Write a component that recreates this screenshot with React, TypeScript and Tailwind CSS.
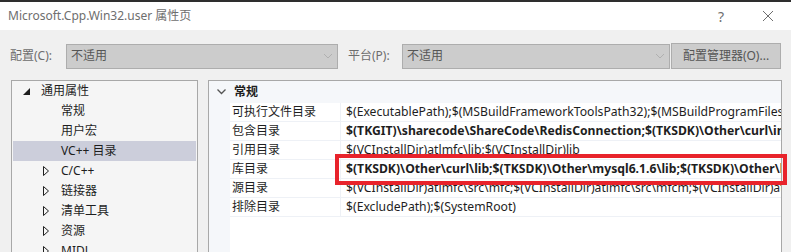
import React from "react";

const font = { fontFamily: '"Noto Sans", "Noto Sans CJK SC", sans-serif' };

type TreeItem = { label: string; level: 0 | 1; arrow?: "open" | "closed"; selected?: boolean };

const tree: TreeItem[] = [
  { label: "通用属性", level: 0, arrow: "open" },
  { label: "常规", level: 1 },
  { label: "用户宏", level: 1 },
  { label: "VC++ 目录", level: 1, selected: true },
  { label: "C/C++", level: 1, arrow: "closed" },
  { label: "链接器", level: 1, arrow: "closed" },
  { label: "清单工具", level: 1, arrow: "closed" },
  { label: "资源", level: 1, arrow: "closed" },
  { label: "MIDL", level: 1, arrow: "closed" },
];

const props = [
  { name: "可执行文件目录", value: "$(ExecutablePath);$(MSBuildFrameworkToolsPath32);$(MSBuildProgramFiles32)\\Microsoft SDKs" },
  { name: "包含目录", value: "$(TKGIT)\\sharecode\\ShareCode\\RedisConnection;$(TKSDK)\\Other\\curl\\include", bold: true },
  { name: "引用目录", value: "$(VCInstallDir)atlmfc\\lib;$(VCInstallDir)lib" },
  { name: "库目录", value: "$(TKSDK)\\Other\\curl\\lib;$(TKSDK)\\Other\\mysql6.1.6\\lib;$(TKSDK)\\Other\\boost", bold: true },
  { name: "源目录", value: "$(VCInstallDir)atlmfc\\src\\mfc;$(VCInstallDir)atlmfc\\src\\mfcm;$(VCInstallDir)atlmfc\\src\\atl" },
  { name: "排除目录", value: "$(ExcludePath);$(SystemRoot)" },
];

const Chevron = () => (
  <svg width="10" height="6" viewBox="0 0 10 6" className="text-[#b0b0b0]">
    <path d="M1 1l4 4 4-4" fill="none" stroke="currentColor" strokeWidth="1" />
  </svg>
);

const Select = ({ className }: { className: string }) => (
  <div className={`flex items-center justify-between h-[25px] bg-[#cccccc] border border-[#adadad] pl-[4px] pr-[4px] text-[#555555] text-[12px] ${className}`}>
    <span>不适用</span>
    <Chevron />
  </div>
);

export default function App() {
  return (
    <div className="w-[791px] h-[252px] overflow-hidden bg-[#f0f0f0] text-[12px]" style={font}>
      <div className="h-[30px] bg-white border-t-2 border-[#2e2e2e] flex items-center">
        <span className="ml-[8px] text-[#6e6e6e] text-[12px]">Microsoft.Cpp.Win32.user 属性页</span>
        <span className="ml-auto text-[#6e6e6e] text-[14px] mr-[38px]">?</span>
        <svg width="12" height="12" viewBox="0 0 12 12" className="mr-[17px] text-[#6e6e6e]">
          <path d="M1 1l10 10M11 1L1 11" stroke="currentColor" strokeWidth="1" />
        </svg>
      </div>

      <div className="relative">
        <div className="flex items-center pt-[13px] pl-[10px]">
          <span className="text-[#6d6d6d] w-[56px]">配置(C):</span>
          <Select className="w-[272px]" />
          <span className="text-[#6d6d6d] ml-[10px] w-[54px]">平台(P):</span>
          <Select className="w-[268px]" />
          <div className="ml-[1px] h-[26px] w-[110px] bg-[#cccccc] border border-[#adadad] flex items-center justify-center text-[#555555]">
            配置管理器(O)...
          </div>
        </div>

        <div className="flex pt-[11px] pl-[11px] gap-[10px]">
          <div className="w-[187px] h-[200px] border border-[#a8a8a8] bg-[#f5f5f5] px-[1px] text-[#1e1e1e]">
            {tree.map((t) => (
              <div
                key={t.label}
                className={`h-[20px] flex items-center ${t.selected ? "bg-[#cccedb]" : ""}`}
              >
                <div className={`flex items-center justify-center w-[8px] ${t.level === 0 ? "ml-[9px]" : "ml-[29px]"}`}>
                  {t.arrow === "open" && (
                    <svg width="7" height="7" viewBox="0 0 7 7">
                      <path d="M7 0L7 7L0 7Z" fill="#1e1e1e" />
                    </svg>
                  )}
                  {t.arrow === "closed" && (
                    <svg width="6" height="10" viewBox="0 0 6 10">
                      <path d="M0.5 0.5L5.5 5L0.5 9.5Z" fill="none" stroke="#1e1e1e" strokeWidth="1" />
                    </svg>
                  )}
                </div>
                <span className="ml-[11px]">{t.label}</span>
              </div>
            ))}
          </div>

          <div className="w-[574px] h-[200px] border border-[#a8a8a8] bg-white text-[#1e1e1e]">
            <div className="h-[22px] bg-[#f5f7fa] flex items-center">
              <svg width="9" height="6" viewBox="0 0 9 6" className="ml-[8px]">
                <path d="M0.5 0.5l4 4 4-4" fill="none" stroke="#555555" strokeWidth="1.3" />
              </svg>
              <span className="ml-[8px] font-bold">常规</span>
            </div>
            <div className="flex">
              <div className="w-[21px] bg-[#f5f7fa] h-[178px]" />
              <div className="flex-1 min-w-0">
                {props.map((p) => (
                  <div key={p.name} className="h-[19px] flex border-b border-[#eef1f6]">
                    <div className="w-[111px] shrink-0 pl-[2px] flex items-center border-r border-[#eef1f6]">{p.name}</div>
                    <div className={`pl-[5px] flex items-center whitespace-nowrap overflow-hidden text-[12.2px] ${p.bold ? "font-bold" : ""}`}>
                      {p.value}
                    </div>
                  </div>
                ))}
              </div>
            </div>
          </div>
        </div>

        <div className="absolute left-[335px] top-[124px] w-[452px] h-[31px] border-[4px] border-[#e8232b]" />
      </div>
    </div>
  );
}
